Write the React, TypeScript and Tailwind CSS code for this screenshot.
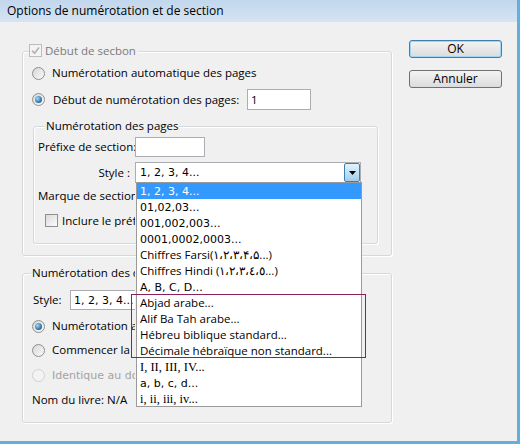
import clsx from "clsx";

const tahoma = "font-['DejaVu_Sans',sans-serif] text-[11px]";

function Radio({ checked, disabled }: { checked?: boolean; disabled?: boolean }) {
  return (
    <span
      className={clsx(
        "flex size-[13px] shrink-0 items-center justify-center rounded-full border",
        disabled
          ? "border-[#d2d2d2] bg-[#f3f3f3]"
          : "border-[#8e8f8f] bg-gradient-to-br from-[#d6d6d6] to-[#fbfbfb]"
      )}
    >
      {checked && (
        <span className="size-[7px] rounded-full bg-[radial-gradient(circle_at_35%_35%,#9edcf8,#1d5f9c_75%)]" />
      )}
    </span>
  );
}

function Checkbox({ checked, disabled }: { checked?: boolean; disabled?: boolean }) {
  return (
    <span
      className={clsx(
        "flex size-[13px] shrink-0 items-center justify-center border",
        disabled
          ? "border-[#bcbcbc] bg-[#f4f4f4]"
          : "border-[#8e8f8f] bg-gradient-to-br from-[#dadada] to-[#fbfbfb]"
      )}
    >
      {checked && (
        <svg viewBox="0 0 9 9" className="size-[9px]">
          <path d="M1 4.6 L3.6 7.2 L8 1.4" stroke="#b4b4b4" strokeWidth="1.7" fill="none" />
        </svg>
      )}
    </span>
  );
}

const styles = [
  { label: "1, 2, 3, 4...", font: tahoma },
  { label: "01,02,03...", font: tahoma },
  { label: "001,002,003...", font: tahoma },
  { label: "0001,0002,0003...", font: tahoma },
  { label: "Chiffres Farsi(\u06F1\u060C\u06F2\u060C\u06F3\u060C\u06F4\u060C\u06F5...)", font: "" },
  { label: "Chiffres Hindi (\u0661\u060C\u0662\u060C\u0663\u060C\u0664\u060C\u0665...)", font: "" },
  { label: "A, B, C, D...", font: tahoma },
  { label: "Abjad arabe...", font: "" },
  { label: "Alif Ba Tah arabe...", font: "" },
  { label: "Hébreu biblique standard...", font: "" },
  { label: "Décimale hébraïque non standard...", font: "" },
  { label: "I, II, III, IV...", font: "font-['Liberation_Serif',serif] text-[12.5px]" },
  { label: "a, b, c, d...", font: tahoma },
  { label: "i, ii, iii, iv...", font: "font-['Liberation_Serif',serif] text-[12.5px]" },
];

function StyleList() {
  return (
    <div className="absolute left-0 top-full z-10 h-[225px] w-[226px] border border-[#9a9a9a] bg-white">
      {styles.map((s, i) => (
        <div
          key={s.label}
          className={clsx(
            "flex h-[16px] items-center whitespace-nowrap pl-[3px]",
            s.font,
            i === 0 && "bg-[#3399ff] text-white"
          )}
        >
          <bdo dir="ltr">{s.label}</bdo>
        </div>
      ))}
      <div className="absolute left-[-6px] top-[111px] h-[64px] w-[235px] border border-[#8c1f5e]" />
    </div>
  );
}

function Combo() {
  return (
    <div className="relative flex h-[21px] w-[226px] border border-[#abadb3] bg-white">
      <span className={clsx("flex flex-1 items-center pl-[4px]", tahoma)}>1, 2, 3, 4...</span>
      <span className="flex w-[16px] items-center justify-center rounded-[2px] border border-[#3c7fb1] bg-gradient-to-b from-[#e3f3fc] to-[#9fcdee]">
        <svg viewBox="0 0 7 4" className="h-[4px] w-[7px]">
          <path d="M0 0 H7 L3.5 4 Z" fill="#000" />
        </svg>
      </span>
      <StyleList />
    </div>
  );
}

function Button({ label, primary }: { label: string; primary?: boolean }) {
  return (
    <button
      className={clsx(
        "flex h-[18px] w-[93px] items-center justify-center rounded-[3px] border bg-gradient-to-b from-[#f4f4f4] to-[#dcdcdc] text-[12px]",
        primary ? "border-[#3c7fb1] shadow-[inset_0_0_0_1px_#9fd6f5]" : "border-[#707070]"
      )}
    >
      {label}
    </button>
  );
}

const groupBox =
  "rounded-[3px] border border-[#d5d9dc] shadow-[inset_1px_1px_0_#fff,1px_1px_0_#fff]";

export default function App() {
  return (
    <div className="flex h-[444px] w-[520px] flex-col overflow-hidden bg-[#f0f0f0] font-['Open_Sans',sans-serif] text-[11.5px] leading-none text-black">
      <div className="flex h-[22px] shrink-0 items-center border-r-[3px] border-[#62b1dc] bg-gradient-to-b from-[#c2d7ed] to-[#d5e4f3] pl-[7px] text-[12px]">
        Options de numérotation et de section
      </div>

      <div className="flex flex-1 border-b-[3px] border-r-[3px] border-[#62b1dc]">
        <div className="w-[392px] shrink-0 pl-[22px] pt-[29px]">
          {/* Début de section */}
          <div className={clsx("h-[205px] w-[370px]", groupBox)}>
            <div className="-mt-[8px] ml-[6px] flex h-[13px] w-fit items-center gap-[3px] bg-[#f0f0f0] pr-[2px] text-[#7a7a7a]">
              <Checkbox checked disabled />
              <span>Début de secbon</span>
            </div>

            <div className="mt-[8px] flex h-[16px] items-center gap-[7px] pl-[9px]">
              <Radio />
              <span>Numérotation automatique des pages</span>
            </div>

            <div className="mt-[8px] flex h-[21px] items-center pl-[9px]">
              <Radio checked />
              <span className="ml-[8px] w-[194px] whitespace-nowrap">Début de numérotation des pages:</span>
              <span className="flex h-[21px] w-[64px] items-center border border-[#abadb3] bg-white pl-[3px]">1</span>
            </div>

            <div className={clsx("ml-[10px] mt-[16px] h-[118px] w-[345px]", groupBox)}>
              <div className="-mt-[9px] ml-[11px] flex h-[16px] w-fit items-center bg-[#f0f0f0] px-[1px]">
                Numérotation des pages
              </div>

              <div className="mt-[3px] grid grid-cols-[97px_auto] items-center whitespace-nowrap pl-[4px]">
                <span>Préfixe de section:</span>
                <span className="h-[20px] w-[70px] border border-[#abadb3] bg-white" />
              </div>

              <div className="mt-[5px] grid grid-cols-[97px_auto] items-center pl-[4px]">
                <span className="pr-[5px] text-right">Style :</span>
                <Combo />
              </div>

              <div className="mt-[5px] flex h-[16px] w-[101px] items-center overflow-hidden whitespace-nowrap pl-[4px]">
                Marque de section:
              </div>

              <div className="mt-[10px] flex h-[13px] w-[101px] items-center gap-[4px] overflow-hidden whitespace-nowrap pl-[11px]">
                <Checkbox />
                <span>Inclure le préfixe</span>
              </div>
            </div>
          </div>

          {/* Numérotation des documents */}
          <div className={clsx("mt-[17px] h-[150px] w-[370px]", groupBox)}>
            <div className="-mt-[9px] ml-[8px] flex h-[16px] w-[104px] items-center overflow-hidden whitespace-nowrap bg-[#f0f0f0] px-[1px]">
              Numérotation des documents
            </div>

            <div className="mt-[9px] flex h-[20px] items-center pl-[10px]">
              <span className="w-[37px]">Style:</span>
              <span className={clsx("flex h-[20px] w-[65px] items-center overflow-hidden whitespace-nowrap border border-r-0 border-[#abadb3] bg-white pl-[3px]", tahoma)}>
                1, 2, 3, 4...
              </span>
            </div>

            <div className="mt-[8px] flex h-[16px] w-[112px] items-center gap-[7px] overflow-hidden whitespace-nowrap pl-[9px]">
              <Radio checked />
              <span>Numérotation auto</span>
            </div>

            <div className="mt-[8px] flex h-[16px] w-[112px] items-center gap-[7px] overflow-hidden whitespace-nowrap pl-[9px]">
              <Radio />
              <span>Commencer la</span>
            </div>

            <div className="mt-[9px] flex h-[16px] w-[112px] items-center gap-[7px] overflow-hidden whitespace-nowrap pl-[9px] text-[#a3a3a3]">
              <Radio disabled />
              <span className={tahoma}>Identique au doc</span>
            </div>

            <div className="mt-[9px] flex h-[16px] items-center pl-[9px]">Nom du livre: N/A</div>
          </div>
        </div>

        <div className="flex flex-col gap-[12px] pl-[17px] pt-[18px]">
          <Button label="OK" primary />
          <Button label="Annuler" />
        </div>
      </div>
    </div>
  );
}
